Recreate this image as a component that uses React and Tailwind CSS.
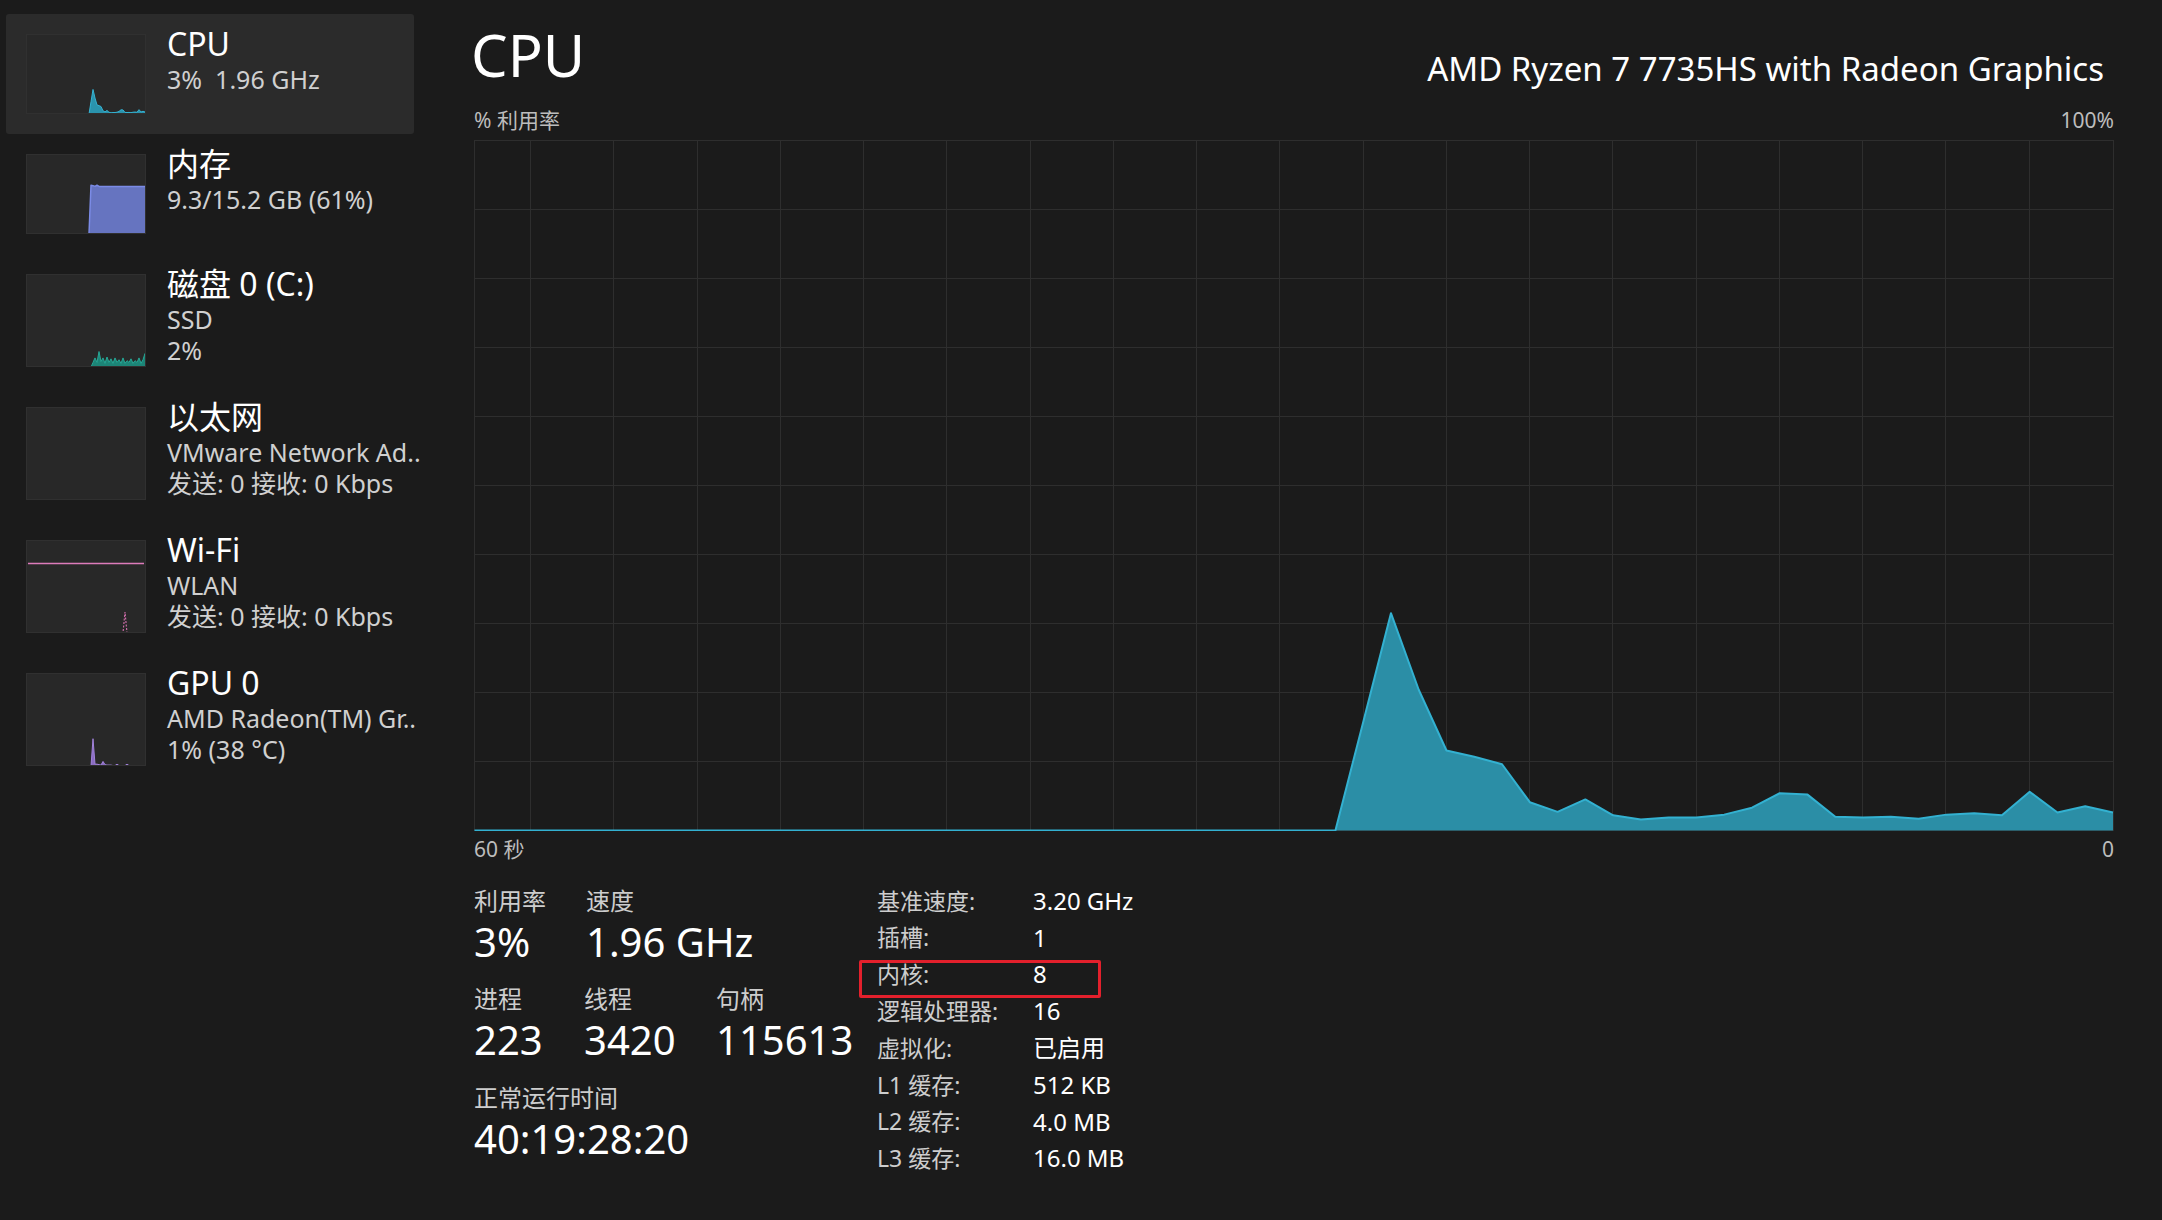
import React from "react";

const cpuData = [
  ...Array(32).fill(0),
  15.7, 31.5, 20.4, 11.6, 10.7, 9.6, 4.1, 2.7, 4.5, 2.2, 1.6, 1.9, 1.9, 2.3,
  3.3, 5.4, 5.2, 2.0, 1.9, 2.0, 1.7, 2.3, 2.5, 2.2, 5.6, 2.6, 3.5, 2.6,
];

const memData = [...Array(32).fill(0), 62.5, 62, 61, 62.5, ...Array(24).fill(61)];

const diskData = [
  ...Array(33).fill(0),
  5, 10, 5, 17, 6, 10, 4, 11, 5, 9, 4, 10, 5, 8, 4, 10, 4, 7, 5, 9, 4, 7, 5, 10,
  4, 8, 15,
];

const gpuData = [
  ...Array(33).fill(0),
  30, 2, 2, 1.5, 1, 5, 1.5, 1, 1, 1, 0.5, 0.5, 2, 0.5, 0.5, 0.5, 0.5, 2, 0.5,
  0.5, 0.5, 0.5, 0.5, 0.5, 0.5, 0.5, 0.5,
];

const wifiData = [...Array(48).fill(0), 0, 23, 0, ...Array(9).fill(0)];

function toPoints(data, w, h, top = 0) {
  const n = data.length;
  return data.map((v, i) => [(i * w) / (n - 1), top + h - (v / 100) * h]);
}

function linePath(pts) {
  return pts.map((p, i) => `${i ? "L" : "M"}${p[0].toFixed(2)},${p[1].toFixed(2)}`).join(" ");
}

function Area({ data, w, h, top = 0, stroke, fill, sw = 1 }) {
  const pts = toPoints(data, w, h, top);
  const line = linePath(pts);
  const area = `${line} L${w},${top + h} L0,${top + h} Z`;
  return (
    <g>
      <path d={area} fill={fill} />
      <path d={line} fill="none" stroke={stroke} strokeWidth={sw} strokeLinejoin="round" />
    </g>
  );
}

function Thumb({ h, children }) {
  return (
    <div
      className="w-[120px] shrink-0 border border-[#303030] bg-[#282828]"
      style={{ height: h }}
    >
      <svg width="118" height={h - 2} className="block">
        {children}
      </svg>
    </div>
  );
}

function SideRow({ selected, tall, title, lines, graph }) {
  const h = tall ? 133 : 120;
  return (
    <div
      className={`flex w-[408px] px-[20px] rounded-[3px] ${selected ? "bg-[#2b2b2b]" : ""}`}
      style={{ height: h }}
    >
      <div className="pt-[20px]">
        <Thumb h={h - 40}>{graph(h - 42)}</Thumb>
      </div>
      <div className="ml-[21px] pt-[10px] whitespace-nowrap">
        <div className="text-[32px] leading-[40px] text-white">{title}</div>
        {lines.map((l) => (
          <div key={l} className="text-[25px] leading-[31px] text-[#d0d0d0]">
            {l}
          </div>
        ))}
      </div>
    </div>
  );
}

function MainGraph() {
  const W = 1640;
  const H = 691;
  const hLines = Array.from({ length: 11 }, (_, i) => i * 69 + 0.5);
  const vLines = [0.5, ...Array.from({ length: 19 }, (_, k) => Math.round(56 + 83.26 * k) + 0.5), W - 0.5];
  return (
    <svg width={W} height={H} className="block">
      {hLines.map((y) => (
        <line key={`h${y}`} x1="0" x2={W} y1={y} y2={y} stroke="#2e2e2e" strokeWidth="1" />
      ))}
      {vLines.map((x) => (
        <line key={`v${x}`} x1={x} x2={x} y1="0" y2={H} stroke="#2e2e2e" strokeWidth="1" />
      ))}
      <g transform="translate(0.5,0)">
        <Area data={cpuData} w={W - 1.5} h={690} top={0.5} stroke="#33b1d1" fill="#2b8ea6" sw={2} />
      </g>
    </svg>
  );
}

const details = [
  ["基准速度:", "3.20 GHz"],
  ["插槽:", "1"],
  ["内核:", "8"],
  ["逻辑处理器:", "16"],
  ["虚拟化:", "已启用"],
  ["L1 缓存:", "512 KB"],
  ["L2 缓存:", "4.0 MB"],
  ["L3 缓存:", "16.0 MB"],
];

function Stat({ label, value, w }) {
  return (
    <div style={{ width: w }} className="shrink-0">
      <div className="text-[24px] leading-[30px] text-[#cdcdcd]">{label}</div>
      <div className="mt-[4.5px] text-[40px] leading-[44px] text-white whitespace-nowrap">{value}</div>
    </div>
  );
}

export default function App() {
  return (
    <div className="flex w-[2162px] h-[1220px] overflow-hidden bg-[#1b1b1b] font-['Noto_Sans','Noto_Sans_CJK_SC',sans-serif]">
      {/* device list */}
      <div className="w-[440px] shrink-0 pl-[6px] pt-[14px]">
        <SideRow
          selected
          title="CPU"
          lines={["3%\u00a0 1.96 GHz"]}
          graph={(h) => <Area data={cpuData} w={118} h={h} top={1} stroke="#35b3d3" fill="#2a93ad" />}
        />
        <SideRow
          title="内存"
          lines={["9.3/15.2 GB (61%)"]}
          graph={(h) => <Area data={memData} w={118} h={h} top={1} stroke="#7b8be6" fill="#6674c0" sw={1.5} />}
        />
        <SideRow
          tall
          title="磁盘 0 (C:)"
          lines={["SSD", "2%"]}
          graph={(h) => <Area data={diskData} w={118} h={h} top={1} stroke="#26a796" fill="#1c8577" />}
        />
        <SideRow
          tall
          title="以太网"
          lines={["VMware Network Ad..", "发送: 0 接收: 0 Kbps"]}
          graph={(h) => (
            <line x1="0" x2="118" y1={h + 0.5} y2={h + 0.5} stroke="#c86aa5" strokeWidth="1" strokeDasharray="2 1" />
          )}
        />
        <SideRow
          tall
          title="Wi-Fi"
          lines={["WLAN", "发送: 0 接收: 0 Kbps"]}
          graph={(h) => (
            <g>
              <line x1="1" x2="117" y1="22.5" y2="22.5" stroke="#dd7bbb" strokeWidth="1.4" />
              <path
                d={linePath(toPoints(wifiData, 118, h, 1))}
                fill="none"
                stroke="#c86aa5"
                strokeWidth="1.2"
                strokeDasharray="2 1.5"
              />
            </g>
          )}
        />
        <SideRow
          tall
          title="GPU 0"
          lines={["AMD Radeon(TM) Gr..", "1% (38 °C)"]}
          graph={(h) => <Area data={gpuData} w={118} h={h} top={1} stroke="#a283db" fill="#8a6cc2" />}
        />
      </div>

      {/* main panel */}
      <div className="w-[1640px] shrink-0 ml-[34px]">
        <div className="flex items-start justify-between pt-[26px]">
          <div className="ml-[-3px] text-[58px] leading-[58px] text-white">CPU</div>
          <div className="mr-[10px] mt-[23px] text-[33px] leading-[40px] text-white">
            AMD Ryzen 7 7735HS with Radeon Graphics
          </div>
        </div>

        <div className="mt-[18px] flex justify-between text-[21px] leading-[26px] text-[#bdbdbd]">
          <span>% 利用率</span>
          <span>100%</span>
        </div>

        <div className="mt-[7px]">
          <MainGraph />
        </div>

        <div className="mt-[5px] flex justify-between text-[21px] leading-[26px] text-[#bdbdbd]">
          <span>60 秒</span>
          <span>0</span>
        </div>

        <div className="mt-[17px] flex">
          <div className="w-[403px] shrink-0 pt-[6.5px]">
            <div className="flex">
              <Stat label="利用率" value="3%" w={112} />
              <Stat label="速度" value="1.96 GHz" w={200} />
            </div>
            <div className="mt-[19.5px] flex">
              <Stat label="进程" value="223" w={110} />
              <Stat label="线程" value="3420" w={132} />
              <Stat label="句柄" value="115613" w={150} />
            </div>
            <div className="mt-[20.5px]">
              <Stat label="正常运行时间" value="40:19:28:20" w={300} />
            </div>
          </div>

          <div className="mt-[3.5px]">
            {details.map(([k, v], i) => (
              <div key={k} className="relative flex h-[36.8px] items-center">
                {i === 2 && (
                  <div className="absolute left-[-18px] top-[4px] h-[38px] w-[242px] rounded-[2px] border-[3px] border-[#e3202c]" />
                )}
                <span className="w-[156px] text-[23px] text-[#cdcdcd]">{k}</span>
                <span className="text-[24px] text-white">{v}</span>
              </div>
            ))}
          </div>
        </div>
      </div>
    </div>
  );
}
